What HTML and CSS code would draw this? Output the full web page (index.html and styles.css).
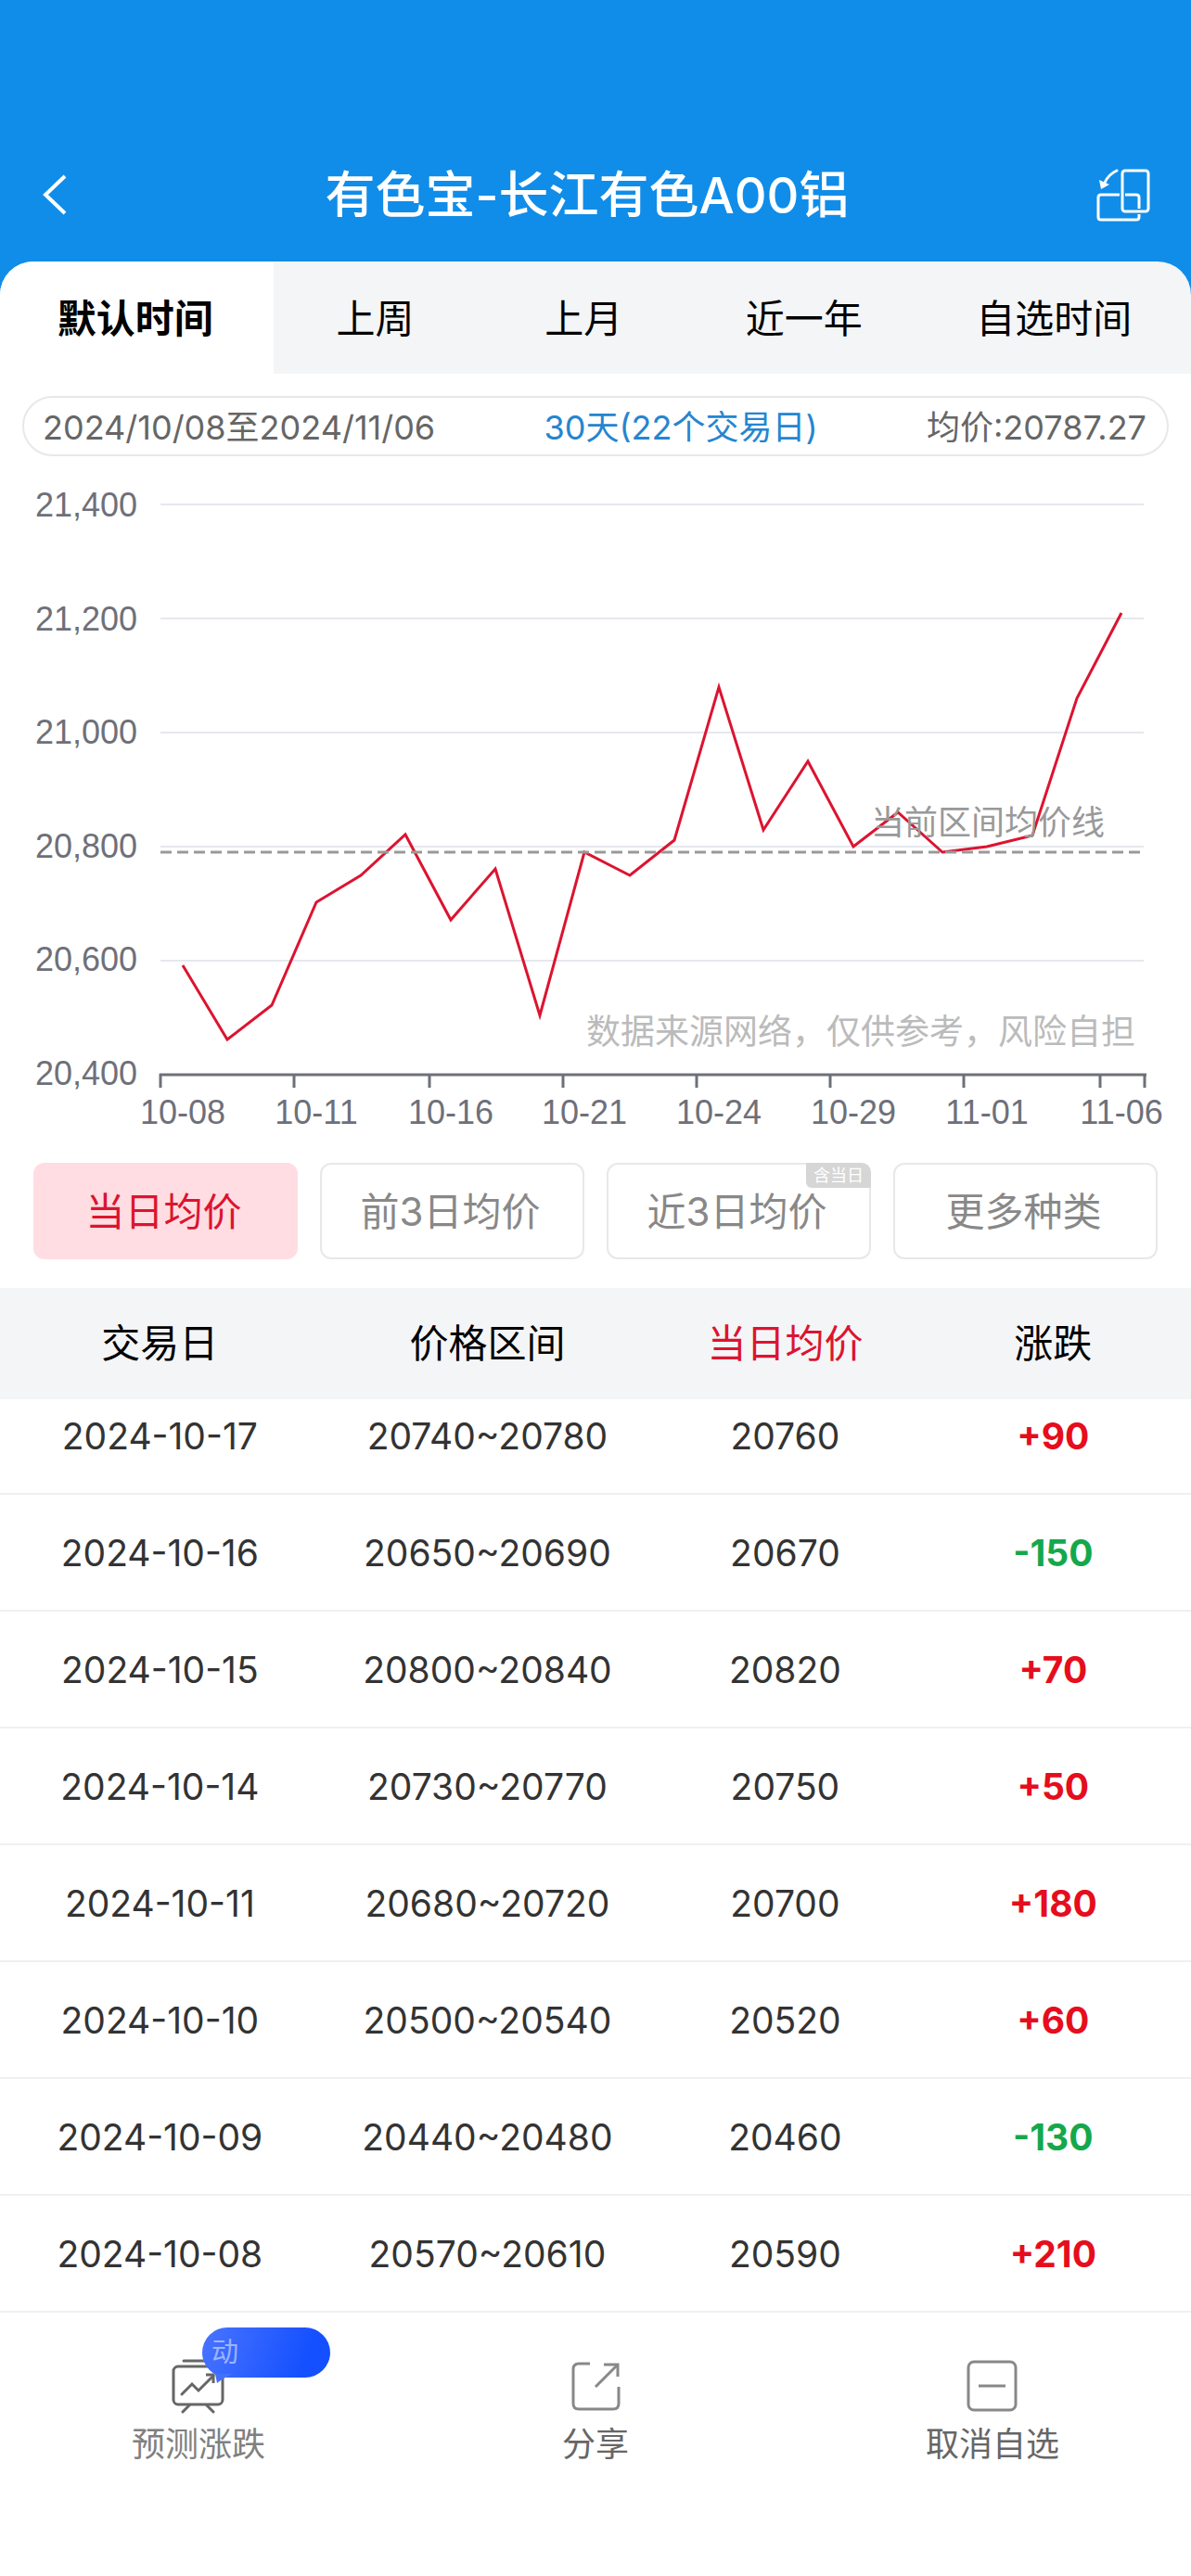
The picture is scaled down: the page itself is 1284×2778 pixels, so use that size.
FILE: index.html
```html
<!DOCTYPE html>
<html lang="zh-CN">
<head>
    <meta charset="UTF-8">
    <meta name="viewport" content="width=device-width, initial-scale=1.0">
    <title>有色宝-长江有色A00铝</title>
    <link rel="stylesheet" href="styles.css">
</head>
<body>
    <header class="top">
        <div class="title-bar">
            <button type="button" class="icon-btn" aria-label="返回">
                <svg width="48" height="60" viewBox="0 0 48 60" fill="none" stroke="#fff" stroke-width="4">
                    <path d="M34 9 L13 29 L34 49"/>
                </svg>
            </button>
            <h1>有色宝-长江有色A00铝</h1>
            <button type="button" class="icon-btn" aria-label="横屏">
                <svg width="60" height="60" viewBox="1 1 60 60" fill="none" stroke="#fff" stroke-width="3">
                    <path d="M26 30 H6 Q3 30 3 33 V54 Q3 57 6 57 H44 Q47 57 47 54 V51"/>
                    <path d="M32 30 H44 Q47 30 47 33 V45"/>
                    <rect x="29" y="4" width="28" height="44" rx="3"/>
                    <path d="M23 4 Q14 8 10 17" stroke-linecap="round"/>
                    <path d="M4 14 L6 24 L15 19 Z" fill="#fff" stroke="none"/>
                </svg>
            </button>
        </div>
        <nav class="tabs">
            <button type="button" class="tab active">默认时间</button>
            <button type="button" class="tab">上周</button>
            <button type="button" class="tab">上月</button>
            <button type="button" class="tab">近一年</button>
            <button type="button" class="tab">自选时间</button>
        </nav>
    </header>

    <main>
        <div class="summary">
            <span>2024/10/08至2024/11/06</span>
            <span class="days">30天(22个交易日)</span>
            <span>均价:20787.27</span>
        </div>

        <svg class="chart" viewBox="0 0 1284 738" role="img" aria-label="价格走势">
            <g class="grid">
                <path d="M173 52 H1233"/>
                <path d="M173 175 H1233"/>
                <path d="M173 298 H1233"/>
                <path d="M173 421 H1233"/>
                <path d="M173 544 H1233"/>
            </g>
            <g class="axis-text y-axis">
                <text x="148" y="65">21,400</text>
                <text x="148" y="188">21,200</text>
                <text x="148" y="310">21,000</text>
                <text x="148" y="433">20,800</text>
                <text x="148" y="555">20,600</text>
                <text x="148" y="678">20,400</text>
            </g>
            <path class="axis" d="M172 667 H1236 M173 666 V681 M317 666 V681 M463 666 V681 M607 666 V681 M751 666 V681 M895 666 V681 M1039 666 V681 M1186 666 V681 M1234 666 V681"/>
            <g class="axis-text x-axis">
                <text x="197" y="720">10-08</text>
                <text x="341" y="720">10-11</text>
                <text x="486" y="720">10-16</text>
                <text x="630" y="720">10-21</text>
                <text x="775" y="720">10-24</text>
                <text x="920" y="720">10-29</text>
                <text x="1064" y="720">11-01</text>
                <text x="1209" y="720">11-06</text>
            </g>
            <polyline class="price-line" points="197,549 245,629 293,592 341,481 389,452 437,408 486,500 534,445 582,603 630,427 679,452 727,414 775,249 823,403 871,329 920,421 968,384 1016,427 1064,421 1113,409 1161,261 1209,169"/>
            <path class="average" d="M173 427 H1231"/>
            <text class="average-text" x="939" y="408">当前区间均价线</text>
            <text class="source-text" x="1224" y="634">数据来源网络，仅供参考，风险自担</text>
        </svg>

        <div class="types">
            <button type="button" class="type active">当日均价</button>
            <button type="button" class="type">前3日均价</button>
            <button type="button" class="type">近3日均价<span class="tag">含当日</span></button>
            <button type="button" class="type">更多种类</button>
        </div>

        <table class="prices">
            <colgroup>
                <col class="col-date">
                <col class="col-range">
                <col class="col-avg">
                <col class="col-change">
            </colgroup>
            <thead>
                <tr><th>交易日</th><th>价格区间</th><th class="current">当日均价</th><th>涨跌</th></tr>
            </thead>
            <tbody>
                <tr><td>2024-10-17</td><td>20740~20780</td><td>20760</td><td class="up">+90</td></tr>
                <tr><td>2024-10-16</td><td>20650~20690</td><td>20670</td><td class="down">-150</td></tr>
                <tr><td>2024-10-15</td><td>20800~20840</td><td>20820</td><td class="up">+70</td></tr>
                <tr><td>2024-10-14</td><td>20730~20770</td><td>20750</td><td class="up">+50</td></tr>
                <tr><td>2024-10-11</td><td>20680~20720</td><td>20700</td><td class="up">+180</td></tr>
                <tr><td>2024-10-10</td><td>20500~20540</td><td>20520</td><td class="up">+60</td></tr>
                <tr><td>2024-10-09</td><td>20440~20480</td><td>20460</td><td class="down">-130</td></tr>
                <tr><td>2024-10-08</td><td>20570~20610</td><td>20590</td><td class="up">+210</td></tr>
            </tbody>
        </table>
    </main>

    <footer class="actions">
        <button type="button" class="action predict">
            <span class="action-icon">
                <svg width="60" height="60" viewBox="0 0 60 60" fill="none" stroke="#666" stroke-width="3" stroke-linecap="round">
                    <path d="M14 3 H46"/>
                    <rect x="3" y="9" width="53" height="41" rx="5"/>
                    <path d="M12 39 L23 28 L30 35 L46 19"/>
                    <path d="M38 18 H46 V27" stroke-linecap="butt"/>
                    <path d="M20 51 L13 58 M39 51 L46 58"/>
                </svg>
                <span class="bubble">动
                    <svg class="tail" width="20" height="12" viewBox="0 0 20 12"><path d="M0 0 H20 Q9 4 2 10 Z" fill="#4470ff"/></svg>
                </span>
            </span>
            预测涨跌
        </button>
        <button type="button" class="action">
            <span class="action-icon">
                <svg width="60" height="60" viewBox="0 0 60 60" fill="none" stroke="#888" stroke-width="3">
                    <path d="M24 6 H12 Q6 6 6 12 V49 Q6 55 12 55 H49 Q55 55 55 49 V31"/>
                    <path d="M39 7 H54 V20"/>
                    <path d="M54 7 L30 31"/>
                </svg>
            </span>
            分享
        </button>
        <button type="button" class="action">
            <span class="action-icon">
                <svg width="60" height="60" viewBox="0 0 60 60" fill="none" stroke="#888" stroke-width="3">
                    <rect x="4" y="4" width="51" height="52" rx="6"/>
                    <path d="M15 30 H44"/>
                </svg>
            </span>
            取消自选
        </button>
    </footer>
</body>
</html>
```

FILE: styles.css
```css
* {
    box-sizing: border-box;
}

body {
    margin: 0;
    background-color: #fff;
    color: #333;
    font-family: Inter, "Noto Sans CJK SC", sans-serif;
}

button {
    padding: 0;
    border: none;
    background: none;
    color: inherit;
    font-family: inherit;
    cursor: pointer;
}

svg {
    display: block;
}

/* Header */
.top {
    padding-top: 140px;
    background-color: #108de9;
}

.title-bar {
    display: flex;
    align-items: center;
    justify-content: space-between;
    height: 142px;
    padding: 0 42px 0 36px;
    color: #fff;
}

h1 {
    margin: 0;
    font-size: 54px;
    font-weight: 500;
    line-height: 80px;
}

.tabs {
    display: grid;
    grid-template-columns: 23fr 17fr 18fr 19fr 23fr;
    height: 121px;
    overflow: hidden;
    border-radius: 36px 36px 0 0;
    background-color: #f4f5f7;
}

.tab {
    padding-bottom: 4px;
    color: #000;
    font-size: 42px;
}

.tab.active {
    padding-right: 4px;
    background-color: #fff;
    font-weight: bold;
}

/* Date range */
.summary {
    display: flex;
    align-items: center;
    justify-content: space-between;
    height: 65px;
    margin: 24px 24px 0;
    padding: 0 22px 4px 20px;
    border: 2px solid #e8e8e8;
    border-radius: 33px;
    color: #666;
    font-size: 36px;
}

.days {
    color: #2585d0;
}

/* Chart */
.chart {
    width: 100%;
    height: auto;
    fill: none;
}

.grid {
    stroke: #e6e8ef;
    stroke-width: 2px;
}

.axis {
    stroke: #6e7079;
    stroke-width: 3px;
}

.axis-text {
    fill: #6e7079;
    font-family: "Liberation Sans", Arial, sans-serif;
    font-size: 36px;
}

.y-axis {
    text-anchor: end;
}

.x-axis {
    text-anchor: middle;
}

.price-line {
    stroke: #dc1430;
    stroke-width: 3px;
}

.average {
    stroke: #999;
    stroke-width: 3px;
    stroke-dasharray: 12 6;
}

.average-text {
    fill: #999;
    font-size: 36px;
}

.source-text {
    fill: #bbb;
    font-size: 37px;
    text-anchor: end;
}

/* Price types */
.types {
    display: grid;
    grid-template-columns: repeat(4, 1fr);
    gap: 24px;
    padding: 24px 36px 31px;
}

.type {
    position: relative;
    height: 104px;
    padding: 0 4px 6px 0;
    border: 2px solid #e8e8e8;
    border-radius: 12px;
    color: #888;
    font-size: 42px;
}

.type.active {
    border-color: #ffdde2;
    background-color: #ffdde2;
    color: #dc1430;
}

.tag {
    position: absolute;
    top: -2px;
    right: -2px;
    padding: 0 8px;
    border-radius: 0 10px 0 6px;
    background-color: #d6d6d6;
    color: #fff;
    font-size: 18px;
    line-height: 27px;
}

/* Price table */
.prices {
    width: 100%;
    table-layout: fixed;
    border-collapse: separate;
    border-spacing: 0;
    text-align: center;
}

.col-date {
    width: 27%;
}

.col-range {
    width: 28%;
}

.col-avg {
    width: 22%;
}

.col-change {
    width: 23%;
}

th {
    padding: 30px 2px 30px 0;
    background-color: #f4f5f7;
    color: #000;
    font-size: 42px;
    font-weight: normal;
    line-height: 60px;
}

th.current {
    color: #dc1430;
}

td {
    padding: 33px 2px 31px 0;
    border-bottom: 2px solid #f0f0f0;
    font-size: 39px;
    line-height: 60px;
}

tbody tr:first-child td {
    padding-top: 10px;
}

.up,
.down {
    font-weight: bold;
}

.up {
    color: #e60d1c;
}

.down {
    color: #15a84b;
}

/* Bottom actions */
.actions {
    display: grid;
    grid-template-columns: repeat(3, 1fr);
    padding: 49px 0 116px;
}

.action {
    display: flex;
    flex-direction: column;
    align-items: center;
    gap: 9px;
    color: #666;
    font-size: 36px;
    line-height: 48px;
}

.predict {
    color: #808080;
}

.action-icon {
    position: relative;
}

.bubble {
    position: absolute;
    top: -33px;
    left: 34px;
    width: 138px;
    height: 54px;
    padding-left: 10px;
    border-radius: 27px;
    background: linear-gradient(110deg, #4a74ff, #1450ff 80%);
    color: rgba(255, 255, 255, 0.5);
    font-size: 29px;
    line-height: 54px;
    text-align: left;
}

.tail {
    position: absolute;
    top: 50px;
    left: 14px;
}
```
